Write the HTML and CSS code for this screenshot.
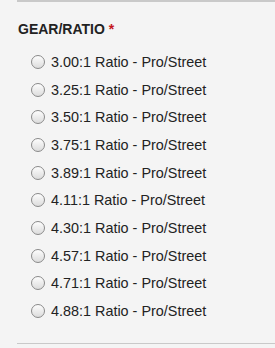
FILE: index.html
```html
<!DOCTYPE html>
<html lang="en">
<head>
    <meta charset="UTF-8">
    <meta name="viewport" content="width=device-width, initial-scale=1.0">
    <title>Gear Ratio</title>
    <link rel="stylesheet" href="styles.css">
</head>
<body>
    <div class="field">
        <div class="label">GEAR/RATIO <span class="required">*</span></div>
        <ul class="options">
            <li><label><input type="radio" name="ratio"> 3.00:1 Ratio - Pro/Street</label></li>
            <li><label><input type="radio" name="ratio"> 3.25:1 Ratio - Pro/Street</label></li>
            <li><label><input type="radio" name="ratio"> 3.50:1 Ratio - Pro/Street</label></li>
            <li><label><input type="radio" name="ratio"> 3.75:1 Ratio - Pro/Street</label></li>
            <li><label><input type="radio" name="ratio"> 3.89:1 Ratio - Pro/Street</label></li>
            <li><label><input type="radio" name="ratio"> 4.11:1 Ratio - Pro/Street</label></li>
            <li><label><input type="radio" name="ratio"> 4.30:1 Ratio - Pro/Street</label></li>
            <li><label><input type="radio" name="ratio"> 4.57:1 Ratio - Pro/Street</label></li>
            <li><label><input type="radio" name="ratio"> 4.71:1 Ratio - Pro/Street</label></li>
            <li><label><input type="radio" name="ratio"> 4.88:1 Ratio - Pro/Street</label></li>
        </ul>
    </div>
</body>
</html>
```

FILE: styles.css
```css
body {
    margin: 0;
    background-color: #f4f4f4;
    font-family: "Liberation Sans", Arial, sans-serif;
    color: #222;
}

.field {
    margin-left: 17px;
    border-top: 2px solid #c9c9c9;
    border-bottom: 1px solid #c9c9c9;
    padding: 19px 0 18px 1px;
}

.label {
    font-size: 14px;
    font-weight: bold;
    line-height: 16px;
    color: #222;
}

.required {
    color: #c4161c;
}

.options {
    list-style: none;
    margin: 11px 0 0 0;
    padding: 0 0 0 13px;
}

.options li {
    height: 27.7px;
    display: flex;
    align-items: center;
}

.options label {
    display: flex;
    align-items: center;
    font-size: 14.4px;
}

input[type="radio"] {
    appearance: none;
    -webkit-appearance: none;
    width: 14px;
    height: 14px;
    margin: 0 6px 0 0;
    border: 1px solid #8a8a8a;
    border-radius: 50%;
    background: linear-gradient(#fdfdfd, #dcdcdc);
    box-sizing: border-box;
}
```
